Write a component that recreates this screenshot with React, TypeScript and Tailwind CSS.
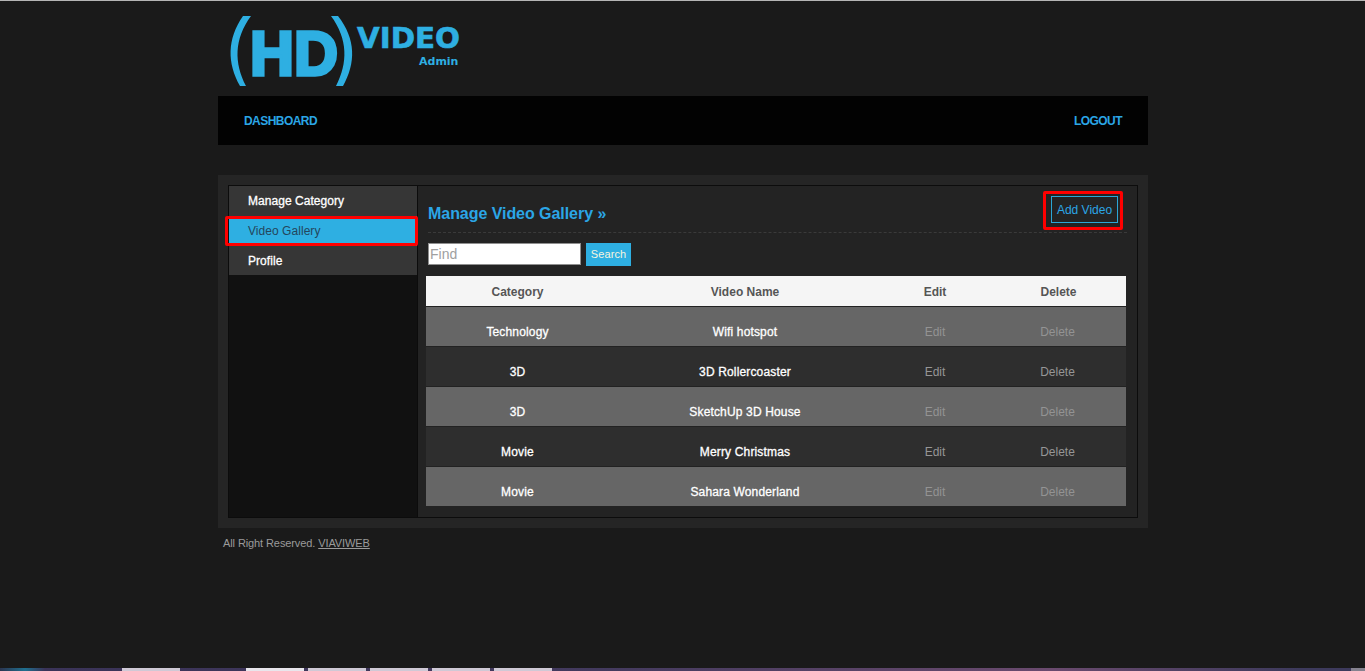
const rows = [
  { category: "Technology", name: "Wifi hotspot" },
  { category: "3D", name: "3D Rollercoaster" },
  { category: "3D", name: "SketchUp 3D House" },
  { category: "Movie", name: "Merry Christmas" },
  { category: "Movie", name: "Sahara Wonderland" },
];

const menu = ["Manage Category", "Video Gallery", "Profile"];

const Logo = () => (
  <svg width="250" height="95" viewBox="0 0 250 95" className="block">
    <path d="M25 15 C9 38 9 62 22 85 L28 85 C16 62 16 38 33 15 Z" fill="#2eafe2" />
    <text x="32" y="73.5" fontFamily="Liberation Sans" fontWeight="700" fontSize="63" fill="#2eafe2" stroke="#2eafe2" strokeWidth="3.5" textLength="88" lengthAdjust="spacingAndGlyphs">HD</text>
    <path d="M113 15 C130 38 130 62 118 85 L125 85 C138 62 138 38 120 15 Z" fill="#2eafe2" />
    <text x="139" y="47" fontFamily="DejaVu Sans" fontWeight="700" fontSize="29" fill="#2eafe2" stroke="#2eafe2" strokeWidth="0.6" textLength="103" lengthAdjust="spacingAndGlyphs">VIDEO</text>
    <text x="201" y="64" fontFamily="DejaVu Sans" fontWeight="700" fontSize="11" fill="#2eafe2">Admin</text>
  </svg>
);

export default function App() {
  return (
    <div className="min-h-screen flex flex-col bg-[#1a1a1a] font-['Liberation_Sans',Arial,sans-serif] text-xs border-t border-[#b5b5b5]">
      <div className="w-[930px] ml-[218px]">
        <header className="h-[95px]">
          <Logo />
        </header>

        <nav className="h-[49px] bg-[#020202] flex items-center justify-between px-[26px] font-bold text-[#2ba6e6] uppercase tracking-[-0.55px]">
          <a href="#">Dashboard</a>
          <a href="#">Logout</a>
        </nav>

        <div className="mt-[30px] bg-[#252525] p-2.5">
          <div className="flex h-[333px] border border-[#0c0c0c] bg-[#232323]">
            <aside className="w-[189px] bg-[#111111] border-r border-[#0c0c0c]">
              {menu.map((item) => (
                <div
                  key={item}
                  className={`relative leading-[30px] pl-[19px] tracking-[0.05px] ${item === "Profile" ? "h-[29px]" : "h-[30px]"} ${item === "Video Gallery" ? "bg-[#2eafe2] text-[#24465c]" : "bg-[#363636] text-white [-webkit-text-stroke:0.3px_white]"}`}
                >
                  {item}
                  {item === "Video Gallery" && (
                    <span className="absolute -left-[4px] top-0 w-[193px] h-[30px] border-[3px] border-[#ff0000] rounded-[2px]" />
                  )}
                </div>
              ))}
            </aside>

            <main className="flex-1 relative">
              <div className="mx-[10px] h-[47px] border-b border-dashed border-[#3a3a3a] pt-[18px]">
                <h1 className="text-base leading-[20px] font-bold text-[#2ba6e6] tracking-[-0.05px]">Manage Video Gallery »</h1>
              </div>

              <div className="absolute right-[14px] top-[5px] border-[3px] border-[#ff0000] rounded-[2px] pl-[5px] pr-[2px] pt-[2px] pb-[4px]">
                <a href="#" className="block w-[67px] h-[27px] leading-[26px] text-center border border-[#2ba6d6] text-[#2ba6e6]">Add Video</a>
              </div>

              <div className="flex gap-[5px] ml-[10px] mt-[10px]">
                <input
                  placeholder="Find"
                  className="w-[153px] h-[22px] bg-white border border-[#8f8f8f] px-[1px] text-sm placeholder:text-[#a0a0a0]"
                />
                <button className="w-[45px] h-[23px] bg-[#2eafe2] text-[#f5f5e0] text-[11px] tracking-[0.1px]">Search</button>
              </div>

              <table className="ml-2 mt-[10px] w-[700px] table-fixed border-collapse text-center">
                <thead>
                  <tr className="h-[30px] bg-[#f5f5f5] text-[#555555] border-b border-[#222222]">
                    <th className="w-[183px] pt-[3px] font-bold">Category</th>
                    <th className="w-[272px] pt-[3px] font-bold">Video Name</th>
                    <th className="w-[108px] pt-[3px] font-bold">Edit</th>
                    <th className="pt-[3px] pl-[2px] font-bold">Delete</th>
                  </tr>
                </thead>
                <tbody>
                  {rows.map((row, i) => (
                    <tr key={i} className={`h-[40px] ${i % 2 === 0 ? "bg-[#666666] text-[#939393]" : "bg-[#2e2e2e] text-[#969696] border-y border-[#222222]"}`}>
                      <td className="pt-[11px] text-white tracking-[0.15px] [-webkit-text-stroke:0.3px_white]">{row.category}</td>
                      <td className="pt-[11px] text-white tracking-[0.15px] [-webkit-text-stroke:0.3px_white]">{row.name}</td>
                      <td className="pt-[11px]">Edit</td>
                      <td className="pt-[11px]">Delete</td>
                    </tr>
                  ))}
                </tbody>
              </table>
            </main>
          </div>
        </div>

        <footer className="mt-[8px] pl-[5px] text-[11px] leading-[14px] text-[#9a9a9a] tracking-[-0.1px]">
          All Right Reserved. <a href="#" className="underline">VIAVIWEB</a>
        </footer>
      </div>

      <div className="mt-auto h-[3px] flex bg-[linear-gradient(90deg,#2b3550_0,#1f6f8f_25px,#3a3358_45px,#433a5e_600px,#6a4a6e_1050px,#3d3a5c_1300px)]">
        <span className="w-[58px] ml-[122px] bg-[#cfc9d6]" />
        <span className="w-[58px] ml-[66px] bg-[#e8e6ec]" />
        <span className="w-[58px] ml-[4px] bg-[#cfc9d6]" />
        <span className="w-[58px] ml-[4px] bg-[#cfc9d6]" />
        <span className="w-[58px] ml-[4px] bg-[#cfc9d6]" />
        <span className="w-[58px] ml-[4px] bg-[#cfc9d6]" />
        <span className="w-[14px] ml-auto bg-[#85828f]" />
      </div>
    </div>
  );
}
